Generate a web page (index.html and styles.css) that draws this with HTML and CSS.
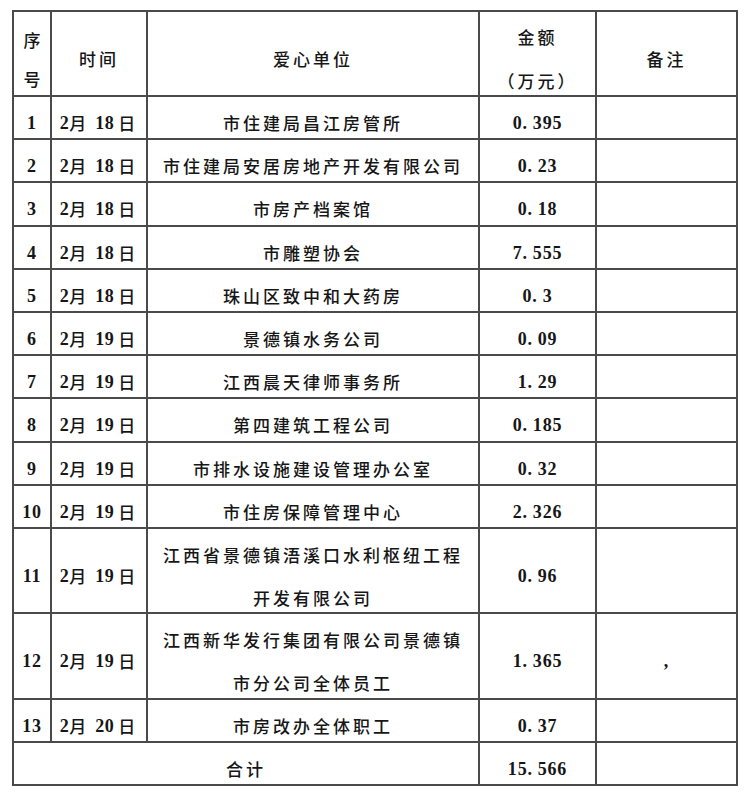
FILE: index.html
```html
<!DOCTYPE html>
<html lang="zh-CN">
<head>
<meta charset="utf-8">
<title>爱心单位捐款明细</title>
<link rel="stylesheet" href="styles.css">
</head>
<body>
<div class="sheet">
  <div class="c cn head stack">序<br>号</div>
  <div class="c cn">时间</div>
  <div class="c cn">爱心单位</div>
  <div class="c cn head stack2">金额<br>（万元）</div>
  <div class="c cn">备注</div>

  <div class="c num">1</div>
  <div class="c cn"><span class="num">2</span>月<span class="num day">18</span>日</div>
  <div class="c cn">市住建局昌江房管所</div>
  <div class="c num">0<span class="pt">.</span>395</div>
  <div class="c"></div>

  <div class="c num">2</div>
  <div class="c cn"><span class="num">2</span>月<span class="num day">18</span>日</div>
  <div class="c cn">市住建局安居房地产开发有限公司</div>
  <div class="c num">0<span class="pt">.</span>23</div>
  <div class="c"></div>

  <div class="c num">3</div>
  <div class="c cn"><span class="num">2</span>月<span class="num day">18</span>日</div>
  <div class="c cn">市房产档案馆</div>
  <div class="c num">0<span class="pt">.</span>18</div>
  <div class="c"></div>

  <div class="c num">4</div>
  <div class="c cn"><span class="num">2</span>月<span class="num day">18</span>日</div>
  <div class="c cn">市雕塑协会</div>
  <div class="c num">7<span class="pt">.</span>555</div>
  <div class="c"></div>

  <div class="c num">5</div>
  <div class="c cn"><span class="num">2</span>月<span class="num day">18</span>日</div>
  <div class="c cn">珠山区致中和大药房</div>
  <div class="c num">0<span class="pt">.</span>3</div>
  <div class="c"></div>

  <div class="c num">6</div>
  <div class="c cn"><span class="num">2</span>月<span class="num day">19</span>日</div>
  <div class="c cn">景德镇水务公司</div>
  <div class="c num">0<span class="pt">.</span>09</div>
  <div class="c"></div>

  <div class="c num">7</div>
  <div class="c cn"><span class="num">2</span>月<span class="num day">19</span>日</div>
  <div class="c cn">江西晨天律师事务所</div>
  <div class="c num">1<span class="pt">.</span>29</div>
  <div class="c"></div>

  <div class="c num">8</div>
  <div class="c cn"><span class="num">2</span>月<span class="num day">19</span>日</div>
  <div class="c cn">第四建筑工程公司</div>
  <div class="c num">0<span class="pt">.</span>185</div>
  <div class="c"></div>

  <div class="c num">9</div>
  <div class="c cn"><span class="num">2</span>月<span class="num day">19</span>日</div>
  <div class="c cn">市排水设施建设管理办公室</div>
  <div class="c num">0<span class="pt">.</span>32</div>
  <div class="c"></div>

  <div class="c num">10</div>
  <div class="c cn"><span class="num">2</span>月<span class="num day">19</span>日</div>
  <div class="c cn">市住房保障管理中心</div>
  <div class="c num">2<span class="pt">.</span>326</div>
  <div class="c"></div>

  <div class="c num">11</div>
  <div class="c cn"><span class="num">2</span>月<span class="num day">19</span>日</div>
  <div class="c cn multi">江西省景德镇浯溪口水利枢纽工程<br>开发有限公司</div>
  <div class="c num">0<span class="pt">.</span>96</div>
  <div class="c"></div>

  <div class="c num">12</div>
  <div class="c cn"><span class="num">2</span>月<span class="num day">19</span>日</div>
  <div class="c cn multi">江西新华发行集团有限公司景德镇<br>市分公司全体员工</div>
  <div class="c num">1<span class="pt">.</span>365</div>
  <div class="c num">,</div>

  <div class="c num">13</div>
  <div class="c cn"><span class="num">2</span>月<span class="num day">20</span>日</div>
  <div class="c cn">市房改办全体职工</div>
  <div class="c num">0<span class="pt">.</span>37</div>
  <div class="c"></div>

  <div class="c cn total-label">合计</div>
  <div class="c num">15<span class="pt">.</span>566</div>
  <div class="c"></div>
</div>
</body>
</html>
```

FILE: styles.css
```css
html, body {
  margin: 0;
  padding: 0;
  background: #ffffff;
}

body {
  color: #161616;
}

.sheet {
  display: grid;
  grid-template-columns: 36px 94px 330px 115px 139px;
  grid-template-rows: 83px repeat(10, 41.2px) 83px 84px 41px 41px;
  gap: 2px;
  width: max-content;
  margin: 10px 0 0 12px;
  background: #4a4a4a;
  border: 2px solid #4a4a4a;
}

.c {
  background: #ffffff;
  display: flex;
  align-items: center;
  justify-content: center;
  text-align: center;
  padding-top: 11px;
  box-sizing: border-box;
  white-space: nowrap;
  line-height: 22px;
}

.cn {
  font-family: "Noto Sans CJK SC", "Noto Sans", sans-serif;
  font-size: 17px;
  font-weight: 500;
  letter-spacing: 3px;
}

.num {
  font-family: "Liberation Serif", "Noto Sans CJK SC", serif;
  font-size: 18px;
  font-weight: bold;
  letter-spacing: 0.8px;
}

.pt {
  margin-right: 5px;
}

.cn .num {
  letter-spacing: 0.5px;
}

.cn .day {
  margin: 0 4px 0 6px;
}

.head.stack {
  line-height: 39px;
  letter-spacing: 0;
}

.head.stack2 {
  line-height: 44px;
}

.multi {
  line-height: 43px;
}

.total-label {
  grid-column: 1 / 4;
}
```
